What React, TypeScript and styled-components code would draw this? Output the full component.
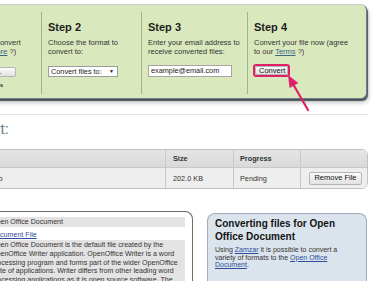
import React from 'react';
import styled, { createGlobalStyle } from 'styled-components';

const GlobalStyle = createGlobalStyle`
  html, body {
    margin: 0;
    padding: 0;
    background: #fff;
  }
  body {
    font-family: "Liberation Sans", Arial, sans-serif;
    overflow: hidden;
  }
`;

const Page = styled.div`
  position: relative;
  width: 375px;
  height: 281px;
  overflow: hidden;
  background: #fff;
`;

/* ---------- steps panel ---------- */

const StepsPanel = styled.div`
  display: flex;
  box-sizing: border-box;
  width: 437px;
  height: 95px;
  margin: 4px 0 0 -70px;
  padding: 7px 0 4px;
  background: #dae9bd;
  border: 1px solid #6f7f8c;
  border-top-color: #c4d0bb;
  border-radius: 6px;
  box-shadow: 1px 2px 1px rgba(30, 40, 50, 0.75), 2px 4px 4px rgba(0, 0, 0, 0.2);
`;

const StepColumn = styled.div<{ $width?: number }>`
  box-sizing: border-box;
  display: flex;
  flex-direction: column;
  align-items: flex-start;
  width: ${p => (p.$width ? `${p.$width}px` : 'auto')};
  flex: ${p => (p.$width ? 'none' : '1')};
  padding: 8px 6px 0;
  border-right: ${p => (p.$width ? '1px solid #a3b092' : 'none')};
`;

const StepTitle = styled.h3`
  margin: 0 0 4px;
  font-size: 11px;
  line-height: 14px;
  font-weight: bold;
  color: #1d1d1d;
`;

const StepText = styled.p`
  margin: 0;
  font-size: 7.5px;
  line-height: 9.3px;
  color: #333;
  white-space: nowrap;
`;

const StepLink = styled.a`
  color: #3d6584;
  text-decoration: underline;
`;

const Controls = styled.div`
  margin-top: 8px;
  display: flex;
  flex-direction: column;
  align-items: flex-start;
`;

const FakeSelect = styled.div`
  display: flex;
  align-items: center;
  justify-content: space-between;
  box-sizing: border-box;
  width: 70px;
  height: 11px;
  margin-top: 1px;
  padding: 0 3px 0 2px;
  border: 1px solid #9c9c9c;
  background: #fff;
  font-size: 7.3px;
  color: #222;
`;

const Caret = styled.span`
  font-size: 5px;
  color: #111;
`;

const EmailInput = styled.input`
  box-sizing: border-box;
  width: 84px;
  height: 12px;
  margin: 0;
  padding: 0 2px;
  border: 1px solid #a5a5a5;
  font-family: inherit;
  font-size: 7.3px;
  color: #222;
  background: #fff;
  outline: none;
`;

const Highlight = styled.span`
  display: inline-flex;
  margin: -1px 0 0 -1px;
  border: 2px solid #e01f66;
  border-radius: 3px;
`;

const PlainButton = styled.button<{ $width?: number; $height: number }>`
  box-sizing: border-box;
  width: ${p => (p.$width ? `${p.$width}px` : 'auto')};
  height: ${p => p.$height}px;
  margin: 0;
  padding: 0 3px;
  border: 1px solid #b5b5b5;
  border-radius: 2px;
  background: linear-gradient(#fbfbfb, #e2e2e2);
  font-family: inherit;
  font-size: 7.5px;
  line-height: 1;
  color: #111;
  white-space: nowrap;
  cursor: pointer;
`;

const TinyNote = styled.div`
  margin-top: 5px;
  font-size: 5.6px;
  line-height: 7px;
  font-weight: bold;
  color: #222;
  white-space: nowrap;
`;

/* ---------- files table ---------- */

const Rule = styled.div`
  width: 368px;
  height: 1px;
  margin-top: 15px;
  background: #e3e3e3;
`;

const SectionTitle = styled.h2`
  margin: 5px 0 0 -97px;
  font-size: 15px;
  line-height: 18px;
  font-weight: normal;
  color: #6a7b8b;
  white-space: nowrap;
`;

const FileTable = styled.div`
  box-sizing: border-box;
  width: 468px;
  margin: 11px 0 0 -100px;
  border: 1px solid #c2c2c2;
  border-radius: 6px;
  overflow: hidden;
`;

const TableRow = styled.div<{ $head?: boolean }>`
  display: grid;
  grid-template-columns: 264px 68px 67px 1fr;
  height: ${p => (p.$head ? 17 : 20)}px;
  background: ${p => (p.$head ? 'linear-gradient(#e5e5e5, #d9d9d9)' : '#eeeeee')};
  border-top: ${p => (p.$head ? 'none' : '1px solid #c8c8c8')};
  font-weight: ${p => (p.$head ? 'bold' : 'normal')};
`;

const Cell = styled.div<{ $first?: boolean; $pad?: number }>`
  display: flex;
  align-items: center;
  padding-left: ${p => p.$pad ?? 7}px;
  border-left: ${p => (p.$first ? 'none' : '1px solid #c8c8c8')};
  font-size: 7.3px;
  color: #333;
  white-space: nowrap;
`;

/* ---------- bottom boxes ---------- */

const Bottom = styled.div`
  display: flex;
  align-items: flex-start;
  gap: 14px;
  margin: 22px 0 0 -20px;
`;

const InfoBox = styled.div`
  box-sizing: border-box;
  width: 213px;
  height: 80px;
  padding: 5px 7px 0 10px;
  border: 1px solid #6c6c6c;
  border-bottom: none;
  border-radius: 0 8px 0 0;
  background: #fff;
`;

const InfoHeader = styled.div`
  height: 10px;
  line-height: 10px;
  background: #e3e3e3;
  font-size: 7.1px;
  color: #333;
  white-space: nowrap;
`;

const InfoLink = styled.a`
  display: block;
  margin-top: 4px;
  line-height: 9px;
  font-size: 7.1px;
  color: #2c4d9c;
  text-decoration: underline;
`;

const InfoBody = styled.p`
  margin: 0;
  padding-top: 1px;
  background: #e3e3e3;
  font-size: 7.1px;
  line-height: 8.8px;
  color: #333;
  white-space: nowrap;
`;

const SideBox = styled.div`
  box-sizing: border-box;
  width: 160px;
  height: 80px;
  margin-top: 2px;
  padding: 4px 8px 0 7px;
  background: #dbe4ec;
  border: 1px solid #9cadbd;
  border-bottom: none;
  border-radius: 8px 8px 0 0;
`;

const SideTitle = styled.h3`
  margin: 0;
  font-size: 10px;
  line-height: 12.5px;
  font-weight: bold;
  color: #141414;
`;

const SideText = styled.p`
  margin: 3px 0 0;
  font-size: 7px;
  line-height: 7.5px;
  color: #333;
  white-space: nowrap;
`;

const SideLink = styled.a`
  color: #2c4d9c;
  text-decoration: underline;
`;

const ArrowLayer = styled.svg`
  position: absolute;
  left: 0;
  top: 0;
  pointer-events: none;
`;

export default function App() {
  return (
    <Page>
      <GlobalStyle />

      <StepsPanel>
        <StepColumn $width={111}>
          <StepTitle>Step 1</StepTitle>
          <StepText>
            Select the files to convert
            <br />
            or URLs (Learn <StepLink>more</StepLink> ?)
          </StepText>
          <Controls>
            <PlainButton $width={79} $height={10} style={{ marginTop: 2 }}>
              Choose Files...
            </PlainButton>
            <TinyNote>Or drag &amp; drop your files</TinyNote>
          </Controls>
        </StepColumn>

        <StepColumn $width={100}>
          <StepTitle>Step 2</StepTitle>
          <StepText>
            Choose the format to
            <br />
            convert to:
          </StepText>
          <Controls>
            <FakeSelect>
              Convert files to:
              <Caret>▼</Caret>
            </FakeSelect>
          </Controls>
        </StepColumn>

        <StepColumn $width={106}>
          <StepTitle>Step 3</StepTitle>
          <StepText>
            Enter your email address to
            <br />
            receive converted files:
          </StepText>
          <Controls>
            <EmailInput defaultValue="example@email.com" readOnly />
          </Controls>
        </StepColumn>

        <StepColumn>
          <StepTitle>Step 4</StepTitle>
          <StepText>
            Convert your file now (agree
            <br />
            to our <StepLink>Terms</StepLink> ?)
          </StepText>
          <Controls>
            <Highlight>
              <PlainButton $width={33} $height={9}>
                Convert
              </PlainButton>
            </Highlight>
          </Controls>
        </StepColumn>
      </StepsPanel>

      <Rule />
      <SectionTitle>Files to convert:</SectionTitle>

      <FileTable>
        <TableRow $head>
          <Cell $first $pad={17}>File Name</Cell>
          <Cell $pad={7}>Size</Cell>
          <Cell $pad={6}>Progress</Cell>
          <Cell />
        </TableRow>
        <TableRow>
          <Cell $first $pad={17}>open-office-document.odb</Cell>
          <Cell $pad={7}>202.0 KB</Cell>
          <Cell $pad={6}>Pending</Cell>
          <Cell $pad={8}>
            <PlainButton $width={53} $height={13}>
              Remove File
            </PlainButton>
          </Cell>
        </TableRow>
      </FileTable>

      <Bottom>
        <InfoBox>
          <InfoHeader>Open Office Document</InfoHeader>
          <InfoLink>Document File</InfoLink>
          <InfoBody>
            Open Office Document is the default file created by the
            <br />
            OpenOffice Writer application. OpenOffice Writer is a word
            <br />
            processing program and forms part of the wider OpenOffice
            <br />
            suite of applications. Writer differs from other leading word
            <br />
            processing applications as it is open source software. The
          </InfoBody>
        </InfoBox>

        <SideBox>
          <SideTitle>
            Converting files for Open
            <br />
            Office Document
          </SideTitle>
          <SideText>
            Using <SideLink>Zamzar</SideLink> it is possible to convert a
            <br />
            variety of formats to the <SideLink>Open Office</SideLink>
            <br />
            <SideLink>Document</SideLink>.
          </SideText>
        </SideBox>
      </Bottom>

      <ArrowLayer width={375} height={281} viewBox="0 0 375 281">
        <line x1={308} y1={110} x2={293} y2={84} stroke="#e01f66" strokeWidth={2.2} strokeLinecap="round" />
        <polygon points="288,75 298.3,82.9 289.6,87.9" fill="#e01f66" />
      </ArrowLayer>
    </Page>
  );
}
